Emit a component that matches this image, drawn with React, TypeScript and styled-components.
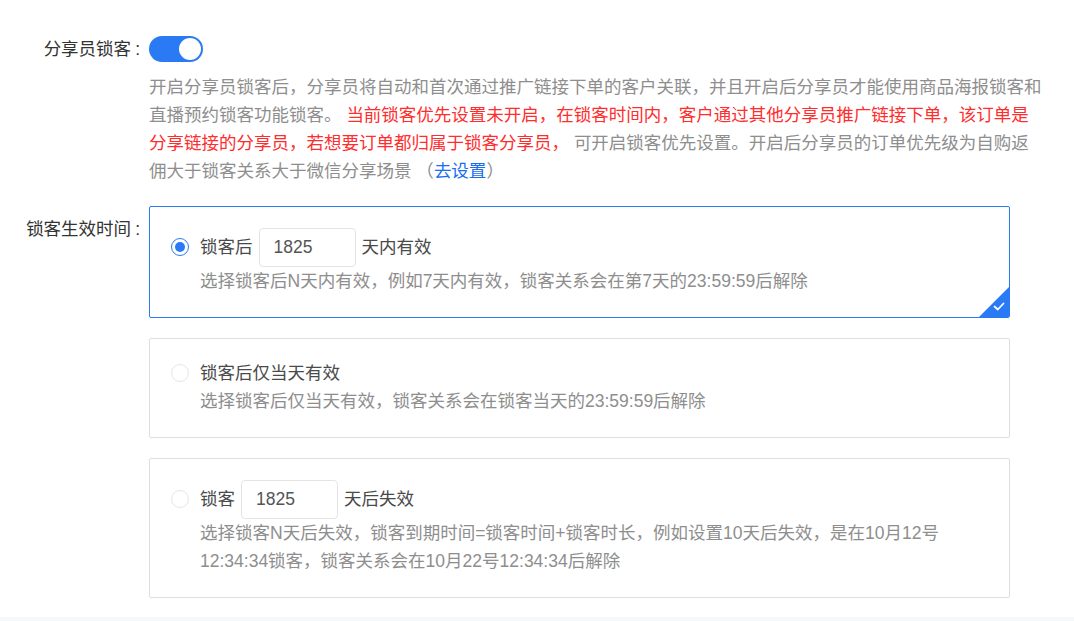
import { FC, ReactNode } from "react";
import styled, { createGlobalStyle } from "styled-components";

const GlobalStyle = createGlobalStyle`
    html, body {
        margin: 0;
        padding: 0;
        background: #fff;
    }
    body {
        font-family: "Liberation Sans", "Noto Sans CJK SC", sans-serif;
        font-size: 17.5px;
        color: #333;
    }
`;

const Page = styled.div`
    width: 1074px;
    height: 621px;
    overflow: hidden;
    padding-top: 35px;
    box-sizing: border-box;
    display: flex;
    flex-direction: column;
`;

const FormRow = styled.div<{ $top?: number }>`
    display: flex;
    align-items: flex-start;
    gap: 9px;
    margin-top: ${({ $top }) => $top ?? 0}px;
`;

const Label = styled.div<{ $pad?: number }>`
    width: 140px;
    flex: none;
    text-align: right;
    line-height: 28px;
    color: #333;
    white-space: nowrap;
    padding-top: ${({ $pad }) => $pad ?? 0}px;
`;

const Colon = styled.span`
    margin-left: 4px;
`;

const Content = styled.div`
    display: flex;
    flex-direction: column;
`;

const SwitchLine = styled.div`
    height: 28px;
    display: flex;
    align-items: center;
`;

const Track = styled.div<{ $on: boolean }>`
    position: relative;
    width: 54px;
    height: 26px;
    border-radius: 13px;
    background: ${({ $on }) => ($on ? "#2a7af5" : "#dcdfe6")};
`;

const Knob = styled.span<{ $on: boolean }>`
    position: absolute;
    top: 2px;
    left: ${({ $on }) => ($on ? "30px" : "2px")};
    width: 22px;
    height: 22px;
    border-radius: 50%;
    background: #fff;
`;

const Help = styled.p`
    width: 896px;
    margin: 10px 0 0;
    line-height: 28px;
    color: #8e8e8e;
`;

const Warn = styled.span`
    color: #ff2d2d;
`;

const Link = styled.a`
    color: #1a6df0;
    text-decoration: none;
    cursor: pointer;
`;

const Options = styled.div`
    display: flex;
    flex-direction: column;
    gap: 20px;
`;

const Card = styled.div<{ $active: boolean }>`
    position: relative;
    width: 861px;
    box-sizing: border-box;
    padding: 20px 20px 22px;
    border: 1px solid ${({ $active }) => ($active ? "#2a7af5" : "#dedede")};
    border-radius: 2px;
    display: flex;
    align-items: flex-start;
    overflow: hidden;
`;

const RadioBox = styled.div<{ $tall: boolean }>`
    height: ${({ $tall }) => ($tall ? 40 : 28)}px;
    display: flex;
    align-items: center;
    margin-right: 11px;
    flex: none;
`;

const Radio = styled.span<{ $checked: boolean }>`
    width: 18px;
    height: 18px;
    margin-left: 1px;
    box-sizing: border-box;
    border-radius: 50%;
    border: 1px solid ${({ $checked }) => ($checked ? "#2a7af5" : "#e6e6e6")};
    background: #fff;
    display: flex;
    align-items: center;
    justify-content: center;

    &::after {
        content: "";
        width: 10px;
        height: 10px;
        border-radius: 50%;
        background: #2a7af5;
        display: ${({ $checked }) => ($checked ? "block" : "none")};
    }
`;

const Body = styled.div`
    flex: 1;
    display: flex;
    flex-direction: column;
`;

const Title = styled.div<{ $tall: boolean }>`
    height: ${({ $tall }) => ($tall ? 40 : 28)}px;
    display: flex;
    align-items: center;
    gap: 6px;
    color: #4a4a4a;
    line-height: 28px;
`;

const DayInput = styled.input`
    width: 97px;
    height: 39px;
    box-sizing: border-box;
    border: 1px solid #e4e4e4;
    border-radius: 4px;
    padding: 0 14px;
    font: inherit;
    color: #555;
    outline: none;
`;

const Desc = styled.div`
    line-height: 28px;
    color: #8e8e8e;
`;

const Corner = styled.div`
    position: absolute;
    right: 0;
    bottom: 0;
    width: 30px;
    height: 30px;
    background: #2a7af5;
    clip-path: polygon(100% 0, 100% 100%, 0 100%);
`;

const Check = styled.svg`
    position: absolute;
    right: 4px;
    bottom: 6px;
`;

const Footer = styled.div`
    margin-top: 19px;
    height: 10px;
    background: #f7f8fa;
`;

type OptionProps = {
    checked: boolean;
    tall: boolean;
    title: ReactNode;
    desc: ReactNode;
};

const Option: FC<OptionProps> = ({ checked, tall, title, desc }) => (
    <Card $active={checked}>
        <RadioBox $tall={tall}>
            <Radio $checked={checked} />
        </RadioBox>
        <Body>
            <Title $tall={tall}>{title}</Title>
            <Desc>{desc}</Desc>
        </Body>
        {checked && (
            <Corner>
                <Check width="12" height="9" viewBox="0 0 12 9">
                    <path d="M1.5 4.5 L4.8 7.5 L10.5 1.5" fill="none" stroke="#fff" strokeWidth="1.8" strokeLinecap="round" strokeLinejoin="round" />
                </Check>
            </Corner>
        )}
    </Card>
);

const App: FC = () => (
    <>
        <GlobalStyle />
        <Page>
            <FormRow>
                <Label>
                    分享员锁客<Colon>:</Colon>
                </Label>
                <Content>
                    <SwitchLine>
                        <Track $on>
                            <Knob $on />
                        </Track>
                    </SwitchLine>
                    <Help>
                        开启分享员锁客后，分享员将自动和首次通过推广链接下单的客户关联，并且开启后分享员才能使用商品海报锁客和直播预约锁客功能锁客。{" "}
                        <Warn>当前锁客优先设置未开启，在锁客时间内，客户通过其他分享员推广链接下单，该订单是分享链接的分享员，若想要订单都归属于锁客分享员，</Warn>{" "}
                        可开启锁客优先设置。开启后分享员的订单优先级为自购返佣大于锁客关系大于微信分享场景 （<Link>去设置</Link>）
                    </Help>
                </Content>
            </FormRow>
            <FormRow $top={21}>
                <Label $pad={9}>
                    锁客生效时间<Colon>:</Colon>
                </Label>
                <Options>
                    <Option
                        checked
                        tall
                        title={
                            <>
                                锁客后
                                <DayInput defaultValue="1825" />
                                天内有效
                            </>
                        }
                        desc="选择锁客后N天内有效，例如7天内有效，锁客关系会在第7天的23:59:59后解除"
                    />
                    <Option
                        checked={false}
                        tall={false}
                        title="锁客后仅当天有效"
                        desc="选择锁客后仅当天有效，锁客关系会在锁客当天的23:59:59后解除"
                    />
                    <Option
                        checked={false}
                        tall
                        title={
                            <>
                                锁客
                                <DayInput defaultValue="1825" />
                                天后失效
                            </>
                        }
                        desc="选择锁客N天后失效，锁客到期时间=锁客时间+锁客时长，例如设置10天后失效，是在10月12号12:34:34锁客，锁客关系会在10月22号12:34:34后解除"
                    />
                </Options>
            </FormRow>
            <Footer />
        </Page>
    </>
);

export default App;
